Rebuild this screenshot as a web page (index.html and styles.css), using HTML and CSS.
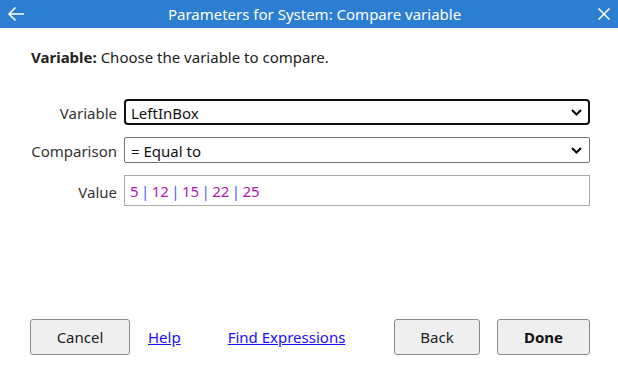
FILE: index.html
```html
<!DOCTYPE html>
<html lang="en">
<head>
<meta charset="UTF-8">
<meta name="viewport" content="width=device-width, initial-scale=1.0">
<title>Parameters for System: Compare variable</title>
<link rel="stylesheet" href="styles.css">
</head>
<body>
<div class="dialog">
    <div class="titlebar">
        <span class="back-icon">
            <svg width="18" height="16" viewBox="0 0 18 16"><path d="M17 8H2M8.5 1.5L2 8l6.5 6.5" fill="none" stroke="#fff" stroke-width="1.6"/></svg>
        </span>
        <span class="title">Parameters for System: Compare variable</span>
        <span class="close-icon">
            <svg width="12" height="12" viewBox="0 0 12 12"><path d="M0.5 0.5L11.5 11.5M11.5 0.5L0.5 11.5" fill="none" stroke="#fff" stroke-width="1.5"/></svg>
        </span>
    </div>
    <div class="content">
        <p class="hint"><b>Variable:</b> Choose the variable to compare.</p>
        <div class="params">
            <label class="param-label">Variable</label>
            <div class="select focused">
                <span>LeftInBox</span>
                <svg class="chevron" width="11" height="7" viewBox="0 0 11 7"><path d="M1 1l4.5 4.5L10 1" fill="none" stroke="#000" stroke-width="2"/></svg>
            </div>
            <label class="param-label">Comparison</label>
            <div class="select">
                <span>= Equal to</span>
                <svg class="chevron" width="11" height="7" viewBox="0 0 11 7"><path d="M1 1l4.5 4.5L10 1" fill="none" stroke="#000" stroke-width="2"/></svg>
            </div>
            <label class="param-label">Value</label>
            <div class="value-input">
                <span class="expr"><span class="num">5</span> <span class="pipe">|</span> <span class="num">12</span> <span class="pipe">|</span> <span class="num">15</span> <span class="pipe">|</span> <span class="num">22</span> <span class="pipe">|</span> <span class="num">25</span></span>
            </div>
        </div>
    </div>
    <div class="footer">
        <button class="btn cancel">Cancel</button>
        <a href="#" class="link help">Help</a>
        <a href="#" class="link find">Find Expressions</a>
        <div class="spacer"></div>
        <button class="btn back">Back</button>
        <button class="btn done">Done</button>
    </div>
</div>
</body>
</html>
```

FILE: styles.css
```css
body {
    margin: 0;
    padding: 0;
    background-color: #fff;
    font-family: "Noto Sans", "Open Sans", sans-serif;
    color: #222;
}
.dialog {
    width: 618px;
    height: 367px;
    display: flex;
    flex-direction: column;
}
.titlebar {
    height: 28px;
    background-color: #2b7ed1;
    color: #fff;
    display: flex;
    align-items: center;
    padding: 0 7px 0 7px;
    box-sizing: border-box;
}
.back-icon {
    width: 18px;
    height: 16px;
    display: flex;
}
.title {
    flex: 1;
    text-align: center;
    font-size: 15px;
    padding-left: 6px;
}
.close-icon {
    width: 12px;
    height: 12px;
    display: flex;
    margin-right: 1px;
}
.content {
    flex: 1;
    padding: 0 28px 0 31px;
}
.hint {
    margin: 18px 0 0 0;
    font-size: 15px;
    line-height: 22px;
}
.hint b {
    font-weight: 700;
}
.params {
    margin-top: 31px;
    display: grid;
    grid-template-columns: 86px 466px;
    column-gap: 7px;
    row-gap: 12px;
    align-items: center;
}
.param-label {
    text-align: right;
    font-size: 15px;
    color: #333;
    padding-top: 2px;
}
.select {
    height: 26px;
    border: 1px solid #767676;
    border-radius: 2px;
    box-sizing: border-box;
    display: flex;
    align-items: center;
    padding: 2px 7px 0 6px;
    font-size: 15px;
    color: #111;
}
.select span {
    flex: 1;
}
.select .chevron {
    margin-top: -2px;
}
.select.focused {
    border: 2px solid #111;
    border-radius: 4px;
    padding-left: 5px;
    padding-right: 6px;
}
.value-input {
    height: 31px;
    border: 1px solid #a9a9a9;
    box-sizing: border-box;
    display: flex;
    align-items: center;
    padding: 0 5px;
    font-size: 15px;
}
.expr {
    white-space: pre;
    word-spacing: -1.5px;
}
.num {
    color: #b01ab0;
}
.pipe {
    color: #4a5cff;
}
.footer {
    display: flex;
    align-items: center;
    padding: 0 28px 12px 30px;
}
.btn {
    height: 36px;
    border: 1px solid #8a8a8a;
    border-radius: 3px;
    background-color: #efefef;
    font-family: "Noto Sans", "Open Sans", sans-serif;
    font-size: 15px;
    color: #222;
    padding: 0;
}
.cancel {
    width: 100px;
}
.back {
    width: 86px;
}
.done {
    width: 93px;
    margin-left: 17px;
    font-weight: 700;
    color: #111;
}
.link {
    color: #1a0dff;
    font-size: 15px;
    text-decoration: underline;
}
.help {
    margin-left: 18px;
}
.find {
    margin-left: 47px;
}
.spacer {
    flex: 1;
}
```
